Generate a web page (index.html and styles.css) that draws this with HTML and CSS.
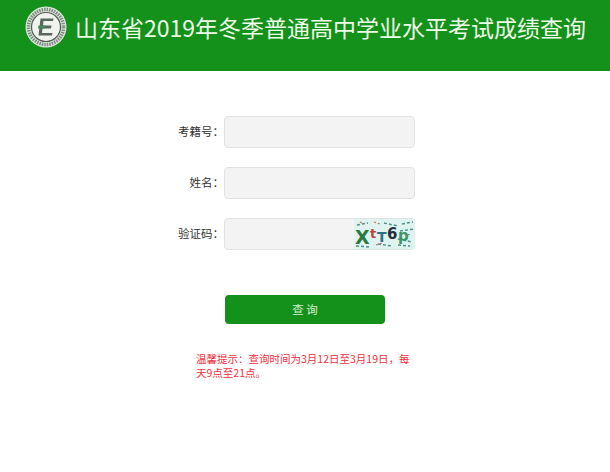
FILE: index.html
```html
<!DOCTYPE html>
<html lang="zh-CN">
<head>
  <meta charset="UTF-8" />
  <meta name="viewport" content="width=device-width, initial-scale=1.0"/>
  <title>山东省2019年冬季普通高中学业水平考试成绩查询</title>
  <link rel="stylesheet" href="styles.css">
</head>
<body>
  <header class="top">
    <svg class="logo" width="42" height="42" viewBox="0 0 42 42">
      <circle cx="21" cy="21" r="20.5" fill="#dfe6de"/>
      <circle cx="21" cy="21" r="17.5" fill="none" stroke="#7d8a80" stroke-width="3.5" stroke-dasharray="1.5 1"/>
      <circle cx="21" cy="21" r="14.5" fill="#f1f3ef" stroke="#4f5f55" stroke-width="1.2"/>
      <path d="M15.5 12.5 H28.5 L28 15 H18.5 L18 19.5 H26.5 L26 22.5 H17.5 L17 27 H27.5 L27 29.5 H13.5 Z" fill="#59675f"/>
      <path d="M13.5 19.5 H20 L19.5 22.5 H13 Z" fill="#3f8a55"/>
    </svg>
    <h1>山东省2019年冬季普通高中学业水平考试成绩查询</h1>
  </header>

  <form class="query">
    <div class="row">
      <label for="ksh">考籍号：</label>
      <input type="text" id="ksh" />
    </div>
    <div class="row">
      <label for="xm">姓名：</label>
      <input type="text" id="xm" />
    </div>
    <div class="row">
      <label for="yzm">验证码：</label>
      <div class="code-wrap">
        <input type="text" id="yzm" />
        <div class="captcha">
          <svg width="61" height="30" viewBox="0 0 61 30">
            <rect width="61" height="30" fill="#dff3f0"/>
            <path d="M3 6 L14 4 M30 4 L44 7 M48 5 L59 3 M2 27 L16 28 M24 25 L38 27 M44 20 L58 23 M46 12 L60 10 M44 26 L56 27" stroke="#4f8f8a" stroke-width="1.5" stroke-dasharray="3 2"/>
            <path d="M6 3 L10 5 M20 3 L26 5 M50 15 L58 16 M22 26 L28 24" stroke="#c9705a" stroke-width="1.2" stroke-dasharray="2 2"/>
            <text x="1" y="25" class="cap-a">X</text>
            <text x="16" y="19" class="cap-b">t</text>
            <text x="23" y="23" class="cap-c">T</text>
            <text x="33" y="20" class="cap-d">6</text>
            <text x="44" y="22" class="cap-e">p</text>
          </svg>
        </div>
      </div>
    </div>
    <button type="button" class="submit">查 询</button>
    <p class="tip">温馨提示：查询时间为3月12日至3月19日，每天9点至21点。</p>
  </form>
</body>
</html>
```

FILE: styles.css
```css
body {
  font-family: "Noto Sans CJK SC", "Noto Sans", sans-serif;
  background: #fff;
  margin: 0;
  padding: 0;
}
.top {
  background: #14911a;
  height: 71px;
  display: flex;
  align-items: flex-start;
  padding: 6px 0 0 25px;
  box-sizing: border-box;
}
.logo {
  flex: none;
  margin-right: 8px;
}
.top h1 {
  margin: 0;
  color: #eefbe9;
  font-size: 23px;
  font-weight: 400;
  line-height: 42px;
  white-space: nowrap;
}
.query {
  width: 240px;
  margin: 45px 0 0 175px;
}
.row {
  display: flex;
  align-items: center;
  height: 32px;
  margin-bottom: 19px;
}
.row label {
  flex: none;
  width: 49px;
  padding-bottom: 2px;
  text-align: right;
  font-size: 11.5px;
  color: #333;
  white-space: nowrap;
}
.row input {
  flex: none;
  width: 191px;
  height: 32px;
  box-sizing: border-box;
  background: #f3f3f3;
  border: 1px solid #e2e2e2;
  border-radius: 4px;
  padding: 0 8px;
}
.code-wrap {
  position: relative;
  flex: none;
  width: 191px;
  height: 32px;
}
.captcha {
  position: absolute;
  right: 0;
  top: 1px;
  width: 61px;
  height: 30px;
}
.captcha svg {
  display: block;
}
.captcha text {
  font-family: "DejaVu Sans", sans-serif;
  font-weight: 700;
}
.cap-a { font-size: 19px; fill: #2c7a3c; }
.cap-b { font-size: 13px; fill: #b8453a; }
.cap-c { font-size: 14px; fill: #2e6f8a; }
.cap-d { font-size: 15px; fill: #23303a; }
.cap-e { font-size: 15px; fill: #3d9464; }
.submit {
  display: block;
  width: 160px;
  height: 29px;
  margin: 45px 0 0 50px;
  background: #14911a;
  color: #d6eed2;
  border: none;
  border-radius: 4px;
  font-family: inherit;
  font-size: 11.5px;
  line-height: 26px;
  padding: 0 0 2px;
}
.tip {
  width: 216px;
  margin: 28px 0 0 21px;
  color: #f2303c;
  font-size: 10.5px;
  line-height: 14px;
}
```
